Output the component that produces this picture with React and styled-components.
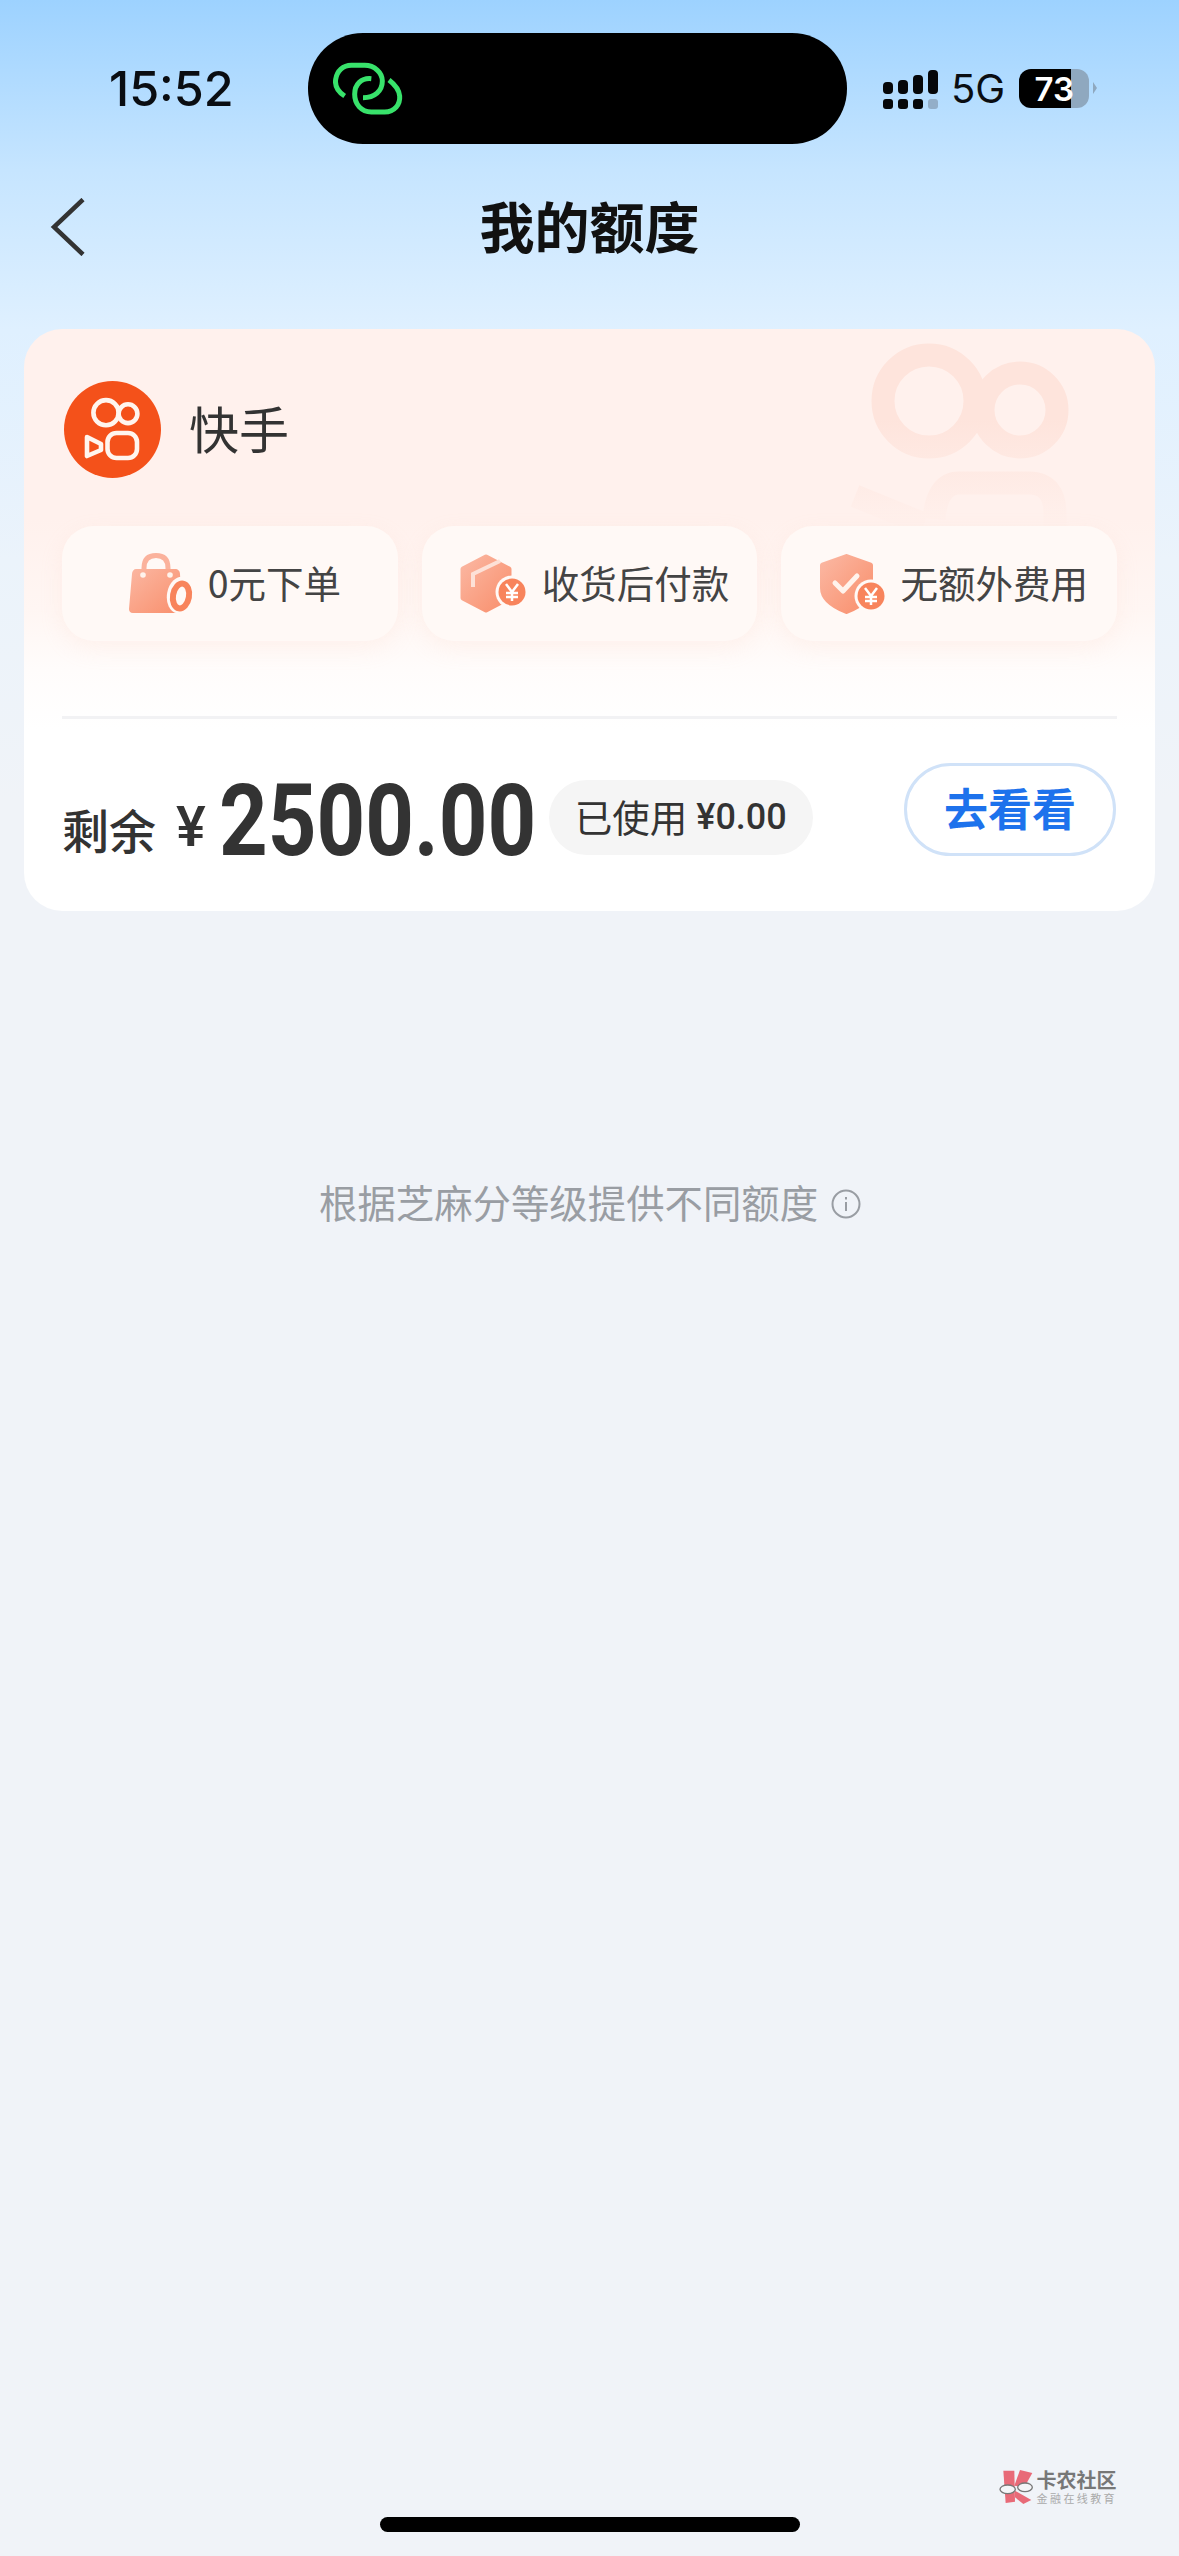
import styled, { createGlobalStyle } from "styled-components";

const GlobalStyle = createGlobalStyle`
  html, body {
    margin: 0;
    padding: 0;
  }
  body {
    background: #f0f3f8;
    font-family: "Noto Sans CJK SC", "Noto Sans", sans-serif;
  }
`;

const Page = styled.div`
  width: 1179px;
  height: 2556px;
  overflow: hidden;
  display: flex;
  flex-direction: column;
  background: linear-gradient(180deg, #9dd2ff 0, #c6e5ff 170px, #dff0ff 330px, #ebf3fb 560px, #f0f3f8 800px);
`;

const StatusBar = styled.div`
  height: 111px;
  margin-top: 33px;
  display: flex;
  align-items: center;
`;

const Time = styled.div`
  width: 199px;
  padding-left: 109px;
  font-family: Inter, sans-serif;
  font-size: 48.5px;
  font-weight: 500;
  color: #0a0d12;
`;

const Island = styled.div`
  width: 539px;
  height: 111px;
  border-radius: 55px;
  background: #000;
  display: flex;
  align-items: center;
  padding-left: 25px;
  box-sizing: border-box;
`;

const StatusRight = styled.div`
  margin-left: 35px;
  display: flex;
  align-items: center;
  height: 60px;
`;

const NetworkLabel = styled.span`
  margin-left: 13px;
  font-family: Inter, sans-serif;
  font-size: 40px;
  font-weight: 400;
  color: #0a0d12;
  line-height: 60px;
`;

const Battery = styled.div`
  margin-left: 14px;
  width: 70px;
  height: 39px;
  border-radius: 12px;
  background: linear-gradient(90deg, #000 0, #000 52px, #8fa8bf 52px, #8fa8bf 100%);
  display: flex;
  align-items: center;
  justify-content: center;
  font-family: Inter, sans-serif;
  font-size: 33px;
  font-weight: 600;
  color: #fff;
  position: relative;
  &::after {
    content: "";
    position: absolute;
    right: -8px;
    top: 13px;
    border-left: 4px solid #8fa8bf;
    border-top: 6px solid transparent;
    border-bottom: 6px solid transparent;
  }
`;

const Nav = styled.div`
  height: 106px;
  margin: 27px 0 52px;
  display: grid;
  grid-template-columns: 1fr auto 1fr;
  align-items: center;
`;

const BackButton = styled.div`
  padding-left: 50px;
  margin-top: 6px;
  display: flex;
`;

const Title = styled.h1`
  margin: 0;
  font-size: 55px;
  font-weight: 700;
  color: #111;
  line-height: 1;
`;

const Card = styled.section`
  position: relative;
  overflow: hidden;
  margin: 0 24px;
  height: 582px;
  box-sizing: border-box;
  padding: 52px 38px 0;
  border-radius: 38px;
  background: linear-gradient(180deg, #fff1ed 0, #fff1ed 190px, #fff6f3 280px, #fffcfb 340px, #fff 400px);
`;

const Ghost = styled.svg`
  position: absolute;
  top: 0;
  right: 76px;
`;

const Brand = styled.div`
  position: relative;
  display: flex;
  align-items: center;
  gap: 28px;
  height: 97px;
  padding-left: 2px;
`;

const BrandName = styled.span`
  font-size: 50px;
  color: #333;
  line-height: 1;
  margin-bottom: 6px;
`;

const Chips = styled.div`
  position: relative;
  margin-top: 48px;
  display: grid;
  grid-template-columns: repeat(3, 1fr);
  gap: 24px;
`;

const Chip = styled.div`
  height: 115px;
  box-sizing: border-box;
  padding-left: 10px;
  border-radius: 32px;
  background: #fff9f6;
  box-shadow: 0 8px 22px rgba(250, 205, 185, 0.16);
  display: flex;
  align-items: center;
  justify-content: center;
  gap: ${props => props.$gap}px;
  font-size: 37.5px;
  color: #444;
`;

const ChipLabel = styled.span`
  margin-bottom: 5px;
`;

const Divider = styled.div`
  height: 3px;
  margin-top: 75px;
  background: #f2f2f4;
`;

const Summary = styled.div`
  margin-top: 44px;
  height: 93px;
  display: flex;
  align-items: flex-end;
`;

const RemainLabel = styled.span`
  font-size: 47px;
  font-weight: 500;
  line-height: 54px;
  color: #333;
`;

const Currency = styled.span`
  margin-left: 20px;
  font-family: Roboto, sans-serif;
  font-size: 56px;
  font-weight: 500;
  line-height: 58px;
  color: #333;
`;

const Amount = styled.span`
  margin-left: 13px;
  width: 311px;
  font-family: Roboto, sans-serif;
  font-size: 100px;
  font-weight: 700;
  line-height: 70px;
  color: #333;
  transform: scaleX(0.85);
  transform-origin: left center;
  white-space: nowrap;
`;

const UsedPill = styled.div`
  margin-left: 19px;
  height: 75px;
  margin-bottom: 1px;
  padding: 0 26px;
  border-radius: 38px;
  background: #f5f5f5;
  display: flex;
  align-items: center;
  gap: 9px;
  font-size: 37.5px;
  color: #333;
`;

const UsedText = styled.span`
  margin-bottom: 5px;
`;

const UsedValue = styled.span`
  font-family: Roboto, sans-serif;
  font-size: 36px;
  font-weight: 500;
  margin-bottom: 2px;
`;

const GoButton = styled.button`
  margin-left: auto;
  margin-right: 1px;
  width: 212px;
  height: 93px;
  box-sizing: border-box;
  border: 3px solid #d0e2f8;
  border-radius: 47px;
  background: #fff;
  padding: 0 0 6px 0;
  font-family: inherit;
  font-size: 44px;
  font-weight: 700;
  color: #1d72ec;
`;

const Tip = styled.div`
  margin-top: 260px;
  padding-left: 319px;
  display: flex;
  align-items: center;
  gap: 13px;
  font-size: 38.4px;
  line-height: 60px;
  color: #999da3;
`;

const TipIcon = styled.span`
  display: flex;
  margin-top: 6px;
`;

const Footer = styled.footer`
  margin-top: auto;
  display: flex;
  flex-direction: column;
`;

const Watermark = styled.div`
  align-self: flex-end;
  margin-right: 62px;
  display: flex;
  align-items: center;
  gap: 4px;
`;

const WatermarkText = styled.div`
  display: flex;
  flex-direction: column;
`;

const WatermarkName = styled.span`
  font-size: 20px;
  font-weight: 700;
  line-height: 20px;
  color: #777;
`;

const WatermarkSub = styled.span`
  margin-top: 2px;
  font-size: 11px;
  line-height: 12px;
  letter-spacing: 2.4px;
  white-space: nowrap;
  color: #aaa;
`;

const HomeIndicator = styled.div`
  width: 420px;
  height: 15px;
  margin: 13px auto 24px;
  border-radius: 8px;
  background: #000;
`;

function LinkIcon() {
  return (
    <svg width="70" height="55" viewBox="100 125 210 165" fill="none" stroke="#38e26b" strokeWidth="15" strokeLinecap="butt">
      <path d="M135 230C112 215 105 200 108 180C112 155 130 138 155 138L195 138C225 138 248 160 248 185C248 215 225 235 190 235" />
      <path d="M215 178C185 175 165 195 165 225C165 255 185 278 215 278L255 278C285 278 302 255 300 230C298 210 285 195 268 182" />
    </svg>
  );
}

function SignalIcon() {
  const tops = [80, 78, 73, 68];
  return (
    <svg width="56" height="40" viewBox="882 67 56 40">
      {tops.map((top, i) => (
        <g key={top}>
          <rect x={883 + i * 15} y={top} width="10" height={92 - top} rx="4" fill="#05070a" />
          <rect x={883 + i * 15} y="97" width="10" height="10" rx="3" fill={i === 3 ? "#93aec8" : "#05070a"} />
        </g>
      ))}
    </svg>
  );
}

function BackIcon() {
  return (
    <svg width="36" height="58" viewBox="0 0 36 58" fill="none" stroke="#333" strokeWidth="4.5">
      <path d="M33 1.5L4 29L33 56.5" />
    </svg>
  );
}

function BrandLogo() {
  return (
    <svg width="97" height="97" viewBox="0 0 97 97" fill="none">
      <circle cx="48.5" cy="48.5" r="48.5" fill="#f4511a" />
      <g stroke="#fff5ee" strokeWidth="4.6" strokeLinejoin="round">
        <circle cx="42" cy="31.7" r="12.6" />
        <circle cx="64" cy="32.7" r="9.4" />
        <rect x="43.5" y="52" width="29.5" height="25" rx="9" />
        <path d="M23 56L37 63V69L23 75Z" />
      </g>
    </svg>
  );
}

function GhostLogo() {
  return (
    <Ghost width="240" height="200" viewBox="840 330 240 200" fill="none">
      <defs>
        <linearGradient id="ghostFade" gradientUnits="userSpaceOnUse" x1="0" y1="420" x2="0" y2="530">
          <stop offset="0" stopColor="#fee4dc" />
          <stop offset="1" stopColor="#fff1ed" />
        </linearGradient>
      </defs>
      <g stroke="url(#ghostFade)" strokeWidth="23">
        <circle cx="930" cy="402" r="46" />
        <circle cx="1021" cy="411" r="37" />
        <path d="M935 520Q938 484 960 484H1030Q1056 484 1056 515V540" />
        <path d="M856 497L925 525" />
      </g>
    </Ghost>
  );
}

function Coin({ cx, cy, r }) {
  return (
    <g>
      <circle cx={cx} cy={cy} r={r + 3} fill="#fff9f6" />
      <circle cx={cx} cy={cy} r={r} fill="#f8845c" />
      <path
        d={`M${cx - 6} ${cy - 8}L${cx} ${cy}L${cx + 6} ${cy - 8}M${cx} ${cy}V${cy + 9}M${cx - 6} ${cy + 1}H${cx + 6}M${cx - 6} ${cy + 5}H${cx + 6}`}
        fill="none"
        stroke="#fff"
        strokeWidth="2.5"
      />
    </g>
  );
}

function ChipGradient({ id }) {
  return (
    <defs>
      <linearGradient id={id} x1="0" y1="0" x2="1" y2="1">
        <stop offset="0" stopColor="#fbb7a2" />
        <stop offset="1" stopColor="#f98f6c" />
      </linearGradient>
    </defs>
  );
}

function BagIcon() {
  return (
    <svg width="64" height="62" viewBox="0 0 64 62">
      <ChipGradient id="chipBag" />
      <path d="M15 19V15C15 6 20 2.5 27 2.5C34 2.5 39 6 39 15V19" fill="none" stroke="#fbb29c" strokeWidth="5" />
      <path d="M7 16H46C49 16 51 18 51 21L53 56C53 59 52 60 49 60H4C1 60 0 58 0 56L3 21C3 18 5 16 7 16Z" fill="url(#chipBag)" />
      <circle cx="14" cy="22" r="2.8" fill="#fff3ec" />
      <circle cx="41" cy="22" r="2.8" fill="#fff3ec" />
      <ellipse cx="51" cy="42" rx="13" ry="18.5" fill="#fff9f6" transform="rotate(10 51 42)" />
      <ellipse cx="52" cy="43" rx="8" ry="12.5" fill="none" stroke="#f8845c" strokeWidth="6" transform="rotate(10 52 43)" />
    </svg>
  );
}

function BoxIcon() {
  return (
    <svg width="70" height="60" viewBox="0 0 70 60">
      <ChipGradient id="chipBox" />
      <path
        d="M26 3L49 15V44L26 56L3 44V15Z"
        fill="url(#chipBox)"
        stroke="url(#chipBox)"
        strokeWidth="5"
        strokeLinejoin="round"
      />
      <path d="M40 7L13 20V33" fill="none" stroke="#fde1d7" strokeWidth="4" />
      <Coin cx={52} cy={38} r={13.5} />
    </svg>
  );
}

function ShieldIcon() {
  return (
    <svg width="68" height="60" viewBox="0 0 68 60">
      <ChipGradient id="chipShield" />
      <path
        d="M26.5 2.5L50.5 11V34C50.5 45 38 53 26.5 57.5C15 53 2.5 45 2.5 34V11Z"
        fill="url(#chipShield)"
        stroke="url(#chipShield)"
        strokeWidth="5"
        strokeLinejoin="round"
      />
      <path d="M15 29L23 37L37 22" fill="none" stroke="#fff3ec" strokeWidth="5" strokeLinecap="round" strokeLinejoin="round" />
      <Coin cx={51} cy={42} r={13.5} />
    </svg>
  );
}

function InfoIcon() {
  return (
    <svg width="30" height="30" viewBox="0 0 30 30" fill="none" stroke="#999da3" strokeWidth="2">
      <circle cx="15" cy="15" r="13.5" />
      <path d="M15 13V22" />
      <path d="M15 8V10.5" />
    </svg>
  );
}

function WatermarkLogo() {
  return (
    <svg width="34" height="34" viewBox="118 88 100 102">
      <path d="M130 90H163L165 183L137 187Z" fill="#e86a78" />
      <path d="M180 88L217 97L193 140L163 135Z" fill="#e86a78" />
      <path d="M165 150L214 178L190 190L165 170Z" fill="#e86a78" />
      <g fill="#f4f5f8" stroke="#777" strokeWidth="4">
        <ellipse cx="143" cy="146" rx="23" ry="13" />
        <ellipse cx="195" cy="140" rx="22" ry="13" />
      </g>
    </svg>
  );
}

const chips = [
  { id: "order", label: "0元下单", icon: <BagIcon />, gap: 15 },
  { id: "pay", label: "收货后付款", icon: <BoxIcon />, gap: 12 },
  { id: "fee", label: "无额外费用", icon: <ShieldIcon />, gap: 12 },
];

function App() {
  return (
    <Page>
      <GlobalStyle />
      <StatusBar>
        <Time>15:52</Time>
        <Island>
          <LinkIcon />
        </Island>
        <StatusRight>
          <SignalIcon />
          <NetworkLabel>5G</NetworkLabel>
          <Battery>73</Battery>
        </StatusRight>
      </StatusBar>

      <Nav>
        <BackButton>
          <BackIcon />
        </BackButton>
        <Title>我的额度</Title>
      </Nav>

      <Card>
        <GhostLogo />
        <Brand>
          <BrandLogo />
          <BrandName>快手</BrandName>
        </Brand>
        <Chips>
          {chips.map(chip => (
            <Chip key={chip.id} $gap={chip.gap}>
              {chip.icon}
              <ChipLabel>{chip.label}</ChipLabel>
            </Chip>
          ))}
        </Chips>
        <Divider />
        <Summary>
          <RemainLabel>剩余</RemainLabel>
          <Currency>¥</Currency>
          <Amount>2500.00</Amount>
          <UsedPill>
            <UsedText>已使用</UsedText>
            <UsedValue>¥0.00</UsedValue>
          </UsedPill>
          <GoButton>去看看</GoButton>
        </Summary>
      </Card>

      <Tip>
        根据芝麻分等级提供不同额度
        <TipIcon>
          <InfoIcon />
        </TipIcon>
      </Tip>

      <Footer>
        <Watermark>
          <WatermarkLogo />
          <WatermarkText>
            <WatermarkName>卡农社区</WatermarkName>
            <WatermarkSub>金融在线教育</WatermarkSub>
          </WatermarkText>
        </Watermark>
        <HomeIndicator />
      </Footer>
    </Page>
  );
}

export default App;
